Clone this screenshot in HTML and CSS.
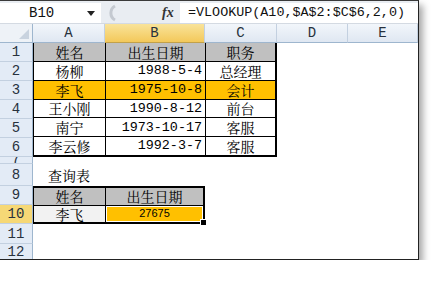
FILE: index.html
```html
<!DOCTYPE html>
<html lang="zh-CN">
<head>
  <meta charset="UTF-8" />
  <title>VLOOKUP</title>
  <link rel="stylesheet" href="styles.css">
</head>
<body>
  <div class="window">

    <!-- FORMULA BAR -->
    <div class="formula-bar">
      <div class="name-box">
        <span class="name">B10</span>
        <span class="drop"></span>
      </div>
      <svg class="grip" width="14" height="20" viewBox="0 0 14 20">
        <path d="M12 3 A8 8 0 0 0 12 17" fill="none" stroke="#c4c9d0" stroke-width="3"/>
      </svg>
      <span class="fx">fx</span>
      <div class="formula">=VLOOKUP(A10,$A$2:$C$6,2,0)</div>
    </div>

    <!-- SHEET -->
    <div class="sheet">
      <div class="corner"></div>
      <div class="col-head">A</div>
      <div class="col-head on">B</div>
      <div class="col-head">C</div>
      <div class="col-head">D</div>
      <div class="col-head">E</div>

      <div class="row-head r1">1</div>
      <div class="row-head r2">2</div>
      <div class="row-head r3">3</div>
      <div class="row-head r4">4</div>
      <div class="row-head r5">5</div>
      <div class="row-head r6">6</div>
      <div class="row-head r7 short">7</div>
      <div class="row-head r8">8</div>
      <div class="row-head r9">9</div>
      <div class="row-head r10 on">10</div>
      <div class="row-head r11">11</div>
      <div class="row-head r12">12</div>

      <div class="staff">
        <div class="cell head">姓名</div>
        <div class="cell head">出生日期</div>
        <div class="cell head">职务</div>

        <div class="cell">杨柳</div>
        <div class="cell num">1988-5-4</div>
        <div class="cell">总经理</div>

        <div class="cell mark">李飞</div>
        <div class="cell num mark">1975-10-8</div>
        <div class="cell mark">会计</div>

        <div class="cell">王小刚</div>
        <div class="cell num">1990-8-12</div>
        <div class="cell">前台</div>

        <div class="cell">南宁</div>
        <div class="cell num">1973-10-17</div>
        <div class="cell">客服</div>

        <div class="cell">李云修</div>
        <div class="cell num">1992-3-7</div>
        <div class="cell">客服</div>
      </div>

      <div class="caption">查询表</div>

      <div class="lookup">
        <div class="cell head">姓名</div>
        <div class="cell head">出生日期</div>
        <div class="cell pale">李飞</div>
        <div class="cell result">27675</div>
      </div>
    </div>

  </div>
</body>
</html>
```

FILE: styles.css
```css
* {
  margin: 0; padding: 0;
  box-sizing: border-box;
}

body {
  background: #fff;
  font-family: "Noto Serif CJK SC", "Noto Sans CJK SC", sans-serif;
}

.window {
  width: 419px;
  height: 260px;
  background: #fff;
  border-top: 1px solid #3a3a3a;
  border-right: 1px solid #222;
  border-bottom: 1px solid #222;
  box-shadow: 4px 5px 7px rgba(0, 0, 0, 0.35);
  overflow: hidden;
  display: flex;
  flex-direction: column;
}

/* formula bar */
.formula-bar {
  height: 26px;
  display: flex;
  align-items: flex-start;
  padding-top: 2px;
  background: #e9edf2;
  border-bottom: 1px solid #d4dae2;
}

.name-box {
  width: 101px;
  height: 20px;
  background: #fff;
  display: flex;
  align-items: center;
  padding-left: 29px;
}

.name {
  font-family: "Liberation Mono", monospace;
  font-size: 14px;
  color: #111;
  flex: 1;
}

.drop {
  width: 0; height: 0;
  border-left: 4px solid transparent;
  border-right: 4px solid transparent;
  border-top: 5px solid #222;
  margin-right: 6px;
}

.grip {
  margin-left: 2px;
}

.fx {
  font-family: "Liberation Serif", serif;
  font-style: italic;
  font-weight: bold;
  font-size: 14px;
  color: #333;
  margin-left: 45px;
  width: 18px;
  line-height: 20px;
}

.formula {
  flex: 1;
  height: 20px;
  background: #fff;
  font-family: "Liberation Mono", monospace;
  font-size: 13.4px;
  line-height: 20px;
  padding-left: 8px;
  color: #111;
  white-space: nowrap;
}

/* sheet grid */
.sheet {
  flex: 1;
  display: grid;
  grid-template-columns: 33px 72px 100px 72px 71px 1fr;
  grid-template-rows: 19px repeat(6, 19px) 7px 22px 19px 19px 20px 1fr;
}

.corner {
  background: #eef2f7;
  border-right: 1px solid #9eb6ce;
  border-bottom: 1px solid #9eb6ce;
  position: relative;
}

.corner::after {
  content: "";
  position: absolute;
  right: 3px; bottom: 3px;
  border-left: 10px solid transparent;
  border-bottom: 10px solid #c9d3df;
}

.col-head {
  background: linear-gradient(#f2f6fb, #dfe7f2);
  border-right: 1px solid #c3d0e0;
  border-bottom: 1px solid #9eb6ce;
  font-family: "Liberation Mono", monospace;
  font-size: 14px;
  display: flex;
  align-items: center;
  justify-content: center;
  color: #27313d;
}

.col-head.on {
  background: linear-gradient(#f9e39a, #f3c85a);
  border-bottom-color: #c2a14a;
}

.row-head {
  grid-column: 1;
  background: #e3ebf6;
  border-right: 1px solid #9eb6ce;
  border-bottom: 1px solid #c3d0e0;
  font-family: "Liberation Mono", monospace;
  font-size: 14px;
  display: flex;
  align-items: center;
  justify-content: center;
  color: #27313d;
  overflow: hidden;
}

.row-head.short { align-items: flex-start; line-height: 5px; }
.row-head.on { background: #f6d876; }

.r1 { grid-row: 2; }
.r2 { grid-row: 3; }
.r3 { grid-row: 4; }
.r4 { grid-row: 5; }
.r5 { grid-row: 6; }
.r6 { grid-row: 7; }
.r7 { grid-row: 8; }
.r8 { grid-row: 9; }
.r9 { grid-row: 10; }
.r10 { grid-row: 11; }
.r11 { grid-row: 12; }
.r12 { grid-row: 13; }

/* data tables */
.staff {
  grid-column: 2 / 5;
  grid-row: 2 / 8;
  display: grid;
  grid-template-columns: 71px 99px 1fr;
  grid-template-rows: repeat(6, 1fr);
  gap: 1px;
  background: #000;
  border-right: 2px solid #000;
  border-bottom: 2px solid #000;
  border-left: 1px solid #000;
}

.cell {
  background: #fff;
  font-size: 14px;
  color: #000;
  display: flex;
  align-items: center;
  justify-content: center;
  line-height: 1;
  white-space: nowrap;
}

.cell.head { background: #c0c0c0; }
.cell.mark { background: #ffc000; }
.cell.pale { background: #f2f2f2; }

.cell.num {
  justify-content: flex-end;
  padding-right: 3px;
  font-family: "Liberation Mono", monospace;
  font-size: 13.4px;
}

.caption {
  grid-column: 2 / 4;
  grid-row: 9;
  font-size: 14px;
  padding-left: 15px;
  display: flex;
  align-items: flex-end;
  padding-bottom: 1px;
}

.lookup {
  grid-column: 2 / 4;
  grid-row: 10 / 12;
  display: grid;
  grid-template-columns: 71px 1fr;
  grid-template-rows: 1fr 1fr;
  gap: 1px;
  background: #000;
  border: 2px solid #000;
  border-left-width: 1px;
}

.cell.result {
  background: #ffc000;
  font-family: "Liberation Sans", sans-serif;
  font-size: 11px;
  box-shadow: inset 0 0 0 1px #fff;
  position: relative;
}

.cell.result::after {
  content: "";
  position: absolute;
  right: -4px; bottom: -4px;
  width: 5px; height: 5px;
  background: #000;
  border: 1px solid #fff;
}
```
